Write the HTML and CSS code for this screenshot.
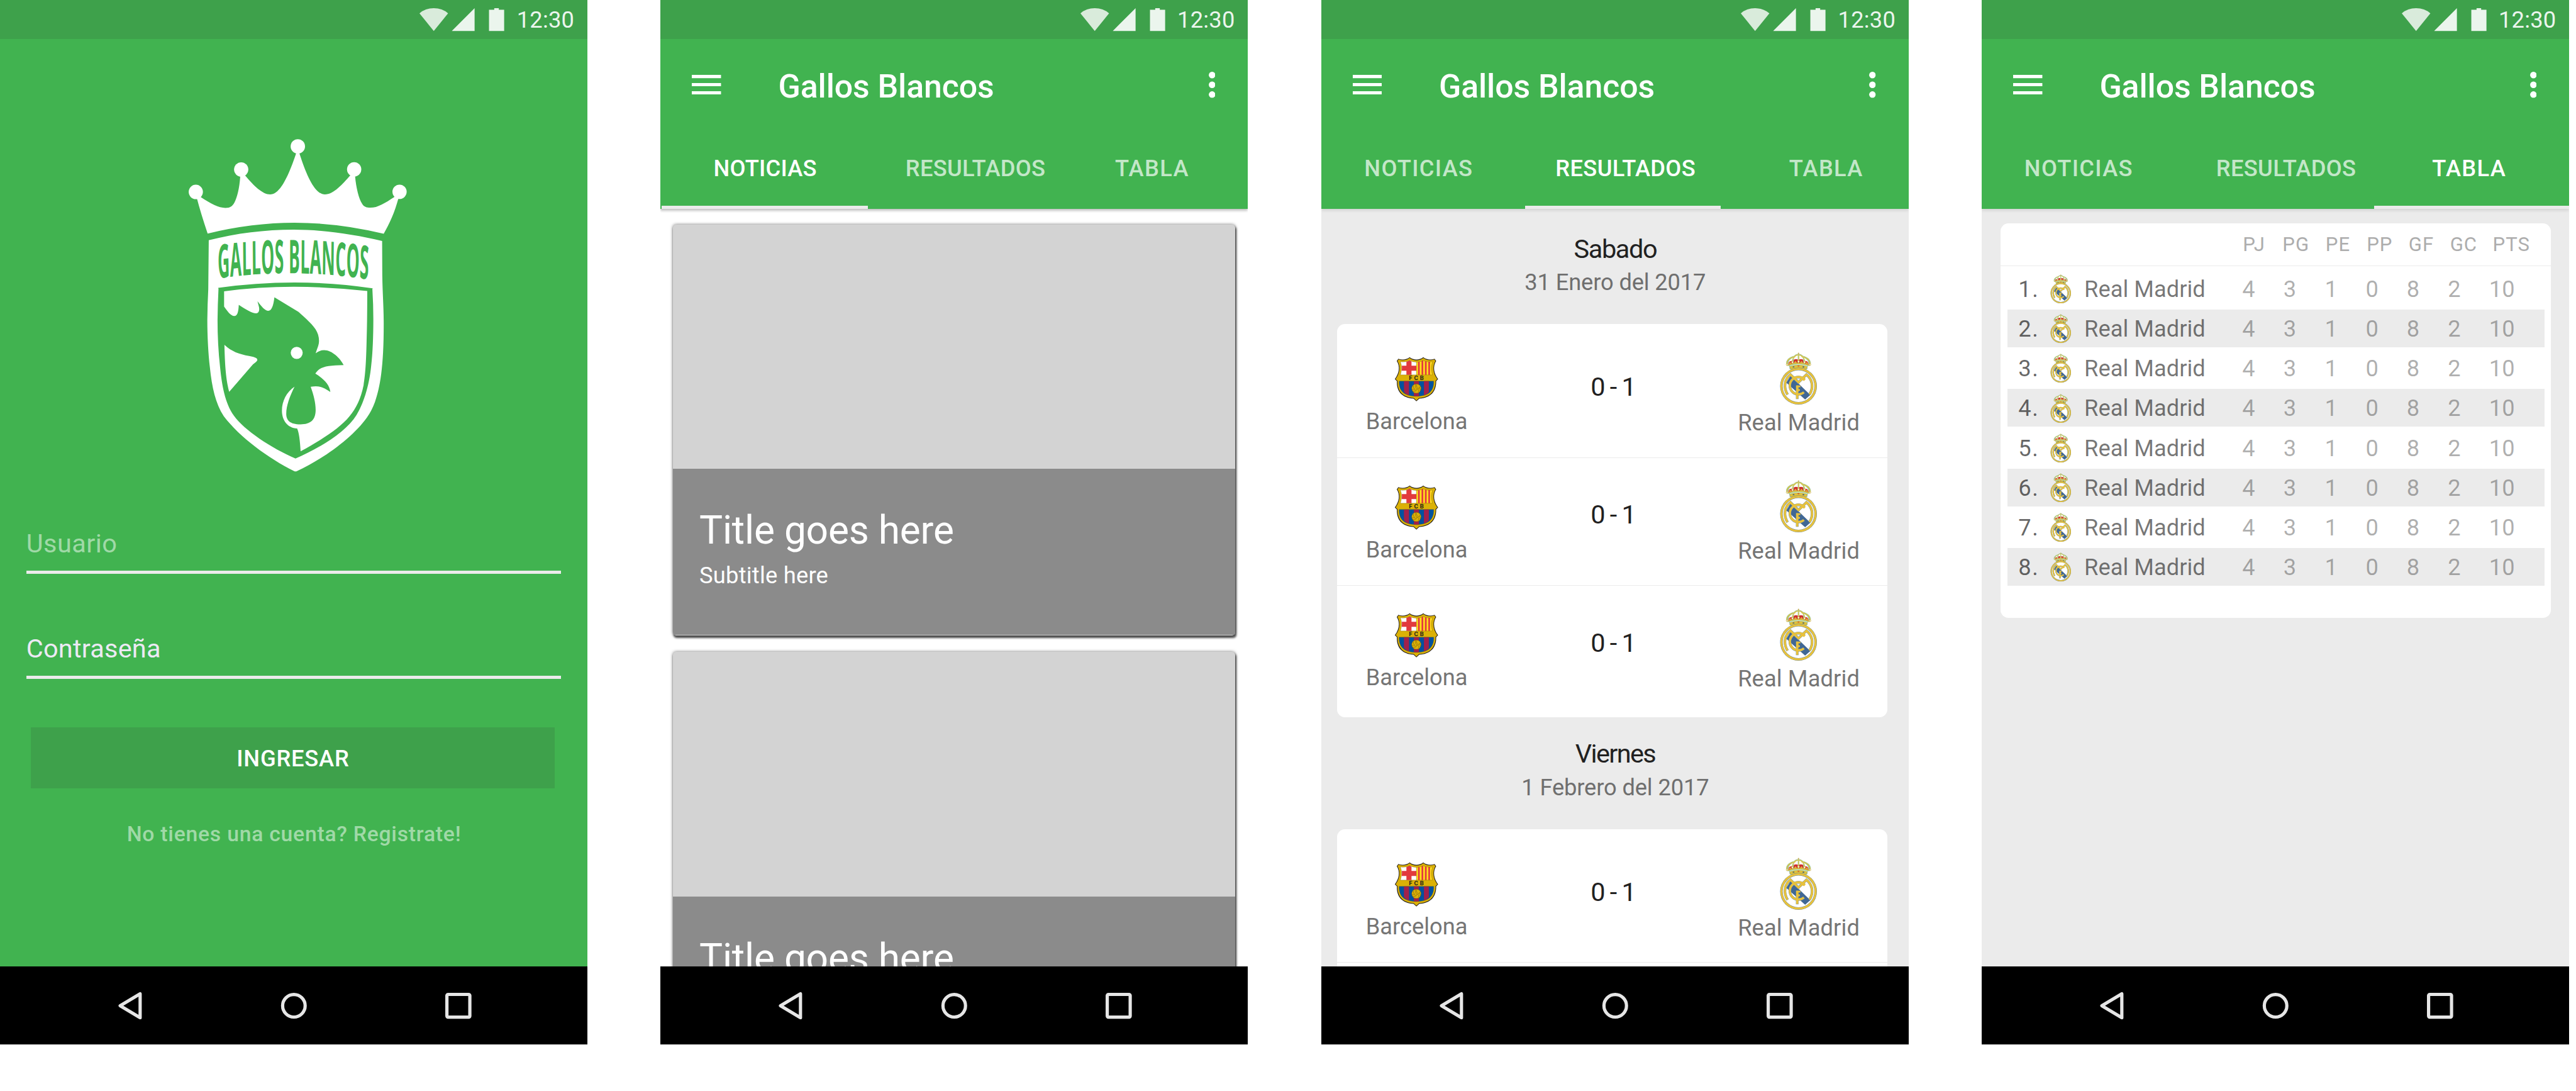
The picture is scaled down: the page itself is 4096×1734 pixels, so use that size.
FILE: index.html
```html
<!DOCTYPE html>
<html lang="es">
<head>
<meta charset="utf-8">
<title>Gallos Blancos</title>
<link rel="stylesheet" href="styles.css">
</head>
<body>

<svg class="defs" aria-hidden="true">
  <symbol id="status-icons" viewBox="1072 0 217 100">
    <path class="wifi" d="M1072 34 Q1087 21 1108.500 21 Q1130 21 1145 34 L1108.500 79 Z"/>
    <path class="status-ink" d="M1154.600 79 H1212.800 V21 Z M1249.600 25 H1263 V21 H1274.700 V25 H1288.300 V79 H1249.600 Z"/>
  </symbol>
  <symbol id="menu" viewBox="0 0 75 50">
    <path fill="#fff" d="M0 0H75V8.300H0Z M0 20.800H75V29.100H0Z M0 41.700H75V50H0Z"/>
  </symbol>
  <symbol id="more" viewBox="0 0 17 67">
    <g fill="#fff"><circle cx="8.500" cy="8.400" r="8.400"/><circle cx="8.500" cy="33.400" r="8.400"/><circle cx="8.500" cy="58.400" r="8.400"/></g>
  </symbol>
  <symbol id="nav-icons" viewBox="300 0 910 200">
    <g class="nav-line">
      <path d="M306.500 100.300 L357.500 70 V131 Z"/>
      <circle cx="750.300" cy="100.500" r="28.800"/>
      <rect x="1141.200" y="71.500" width="58.600" height="58" rx="3"/>
    </g>
  </symbol>
  <symbol id="fcb" viewBox="126 94 340 346">
    <path d="M157 110 C186 120 218 118 244 98 C275 122 317 122 348 98 C374 118 406 120 435 110 L447 127 C420 168 428 222 462 265 L447 281 C449 360 405 410 318 415 L295.500 435 L273 415 C186 410 142 360 146 281 L130 265 C164 222 172 168 145 127 Z" fill="#211d1c"/>
    <path d="M159 115 C190 126 219 122 244 104 C275 128 317 128 348 104 C373 122 402 126 433 115 L441 127 C416 170 423 222 456 265 L442 279 C444 356 402 406 316 410 L295.500 429 L275 410 C190 406 148 356 151 279 L136 265 C169 222 176 170 151 127 Z" fill="#dbb106"/>
    <path d="M173 133 C200 135 225 133 244 122 C262 132 278 135 295.500 135 V233 H173 C183 200 186 165 173 133 Z" fill="#fff"/>
    <path d="M219 132 Q233 129 244 122 Q251 128 258 130 V163 H295.500 V201 H258 V233 H219 V201 H183 Q186 180 184 163 H219 Z" fill="#e23a3d"/>
    <path d="M295.500 135 C315 135 332 131 348 122 C367 133 392 135 420 133 C406 165 409 200 418 233 H295.500 Z" fill="#ffdf1c"/>
    <path d="M308 134 H321 V233 H308 Z M335 128 L348 122 V233 H335 Z M361 128 L374 131 V233 H361 Z M387 133 H400 V233 H387 Z" fill="#e23a3d"/>
    <path d="M173 133 C200 135 225 133 244 122 C275 139 317 139 348 122 C367 133 392 135 420 133 C406 165 409 200 418 233 H173 C183 200 186 165 173 133 Z M295.500 135 V233" fill="none" stroke="#5d4a18" stroke-width="1.500"/>
    <path d="M163 281 H428 C431 350 395 397 295.500 397 C196 397 160 350 163 281 Z" fill="#00529f"/>
    <path d="M200 281 H239 V390 Q215 382 200 364 Z M276 281 H315 V397 H276 Z M353 281 H391 V365 Q376 382 353 390 Z" fill="#a2214b"/>
    <path d="M163 281 H428 C431 350 395 397 295.500 397 C196 397 160 350 163 281 Z" fill="none" stroke="#5d4a18" stroke-width="1.500"/>
    <circle cx="295.500" cy="338" r="36" fill="#dbb106" stroke="#5d4a18" stroke-width="2"/>
    <path d="M290 303 Q284 328 300 342 Q318 338 326 320 M296 307 Q292 322 306 333 M300 342 Q294 362 266 358 M262 345 Q280 338 290 350 M306 340 Q318 344 312 366 M272 316 Q270 332 281 341 M318 330 Q328 340 324 358" fill="none" stroke="#4f4018" stroke-width="2"/>
    <text class="fcb-letters" x="238" y="273" textLength="114">F C B</text>
  </symbol>
  <symbol id="madrid" viewBox="374 58 288 402">
    <path d="M430 160 C412 130 440 96 482 88 C500 66 535 66 552 88 C596 96 622 130 604 160 C588 156 580 168 584 184 H450 C454 168 446 156 430 160 Z" fill="#8fc7a0" stroke="#6c8c86" stroke-width="2"/>
    <path d="M439 152 C436 128 452 108 480 98 C470 114 466 130 470 150 Z M595 152 C598 128 582 108 554 98 C564 114 568 130 564 150 Z" fill="#fff"/>
    <path d="M480 112 C484 90 502 80 512 82 V120 H484 Z M554 112 C550 90 532 80 522 82 V120 H550 Z" fill="#fff"/>
    <path d="M440 152 C438 134 448 124 466 124 L470 148 Z M594 152 C596 134 586 124 568 124 L564 148 Z M478 140 L482 114 Q496 106 512 112 V140 Z M556 140 L552 114 Q538 106 522 112 V140 Z" fill="#d0312f"/>
    <g fill="none" stroke="#dfc13a" stroke-width="8">
      <path d="M430 154 C422 126 444 102 480 92 Q517 62 554 92 C590 102 612 126 604 154"/>
      <path d="M517.500 76 V146 M470 140 C468 114 478 96 494 88 M564 140 C566 114 556 96 540 88"/>
      <path d="M432 157 Q517 128 602 157"/>
    </g>
    <g fill="none" stroke="#a9dab8" stroke-width="5" stroke-linecap="round" stroke-dasharray="1 9">
      <path d="M426 150 C418 122 440 98 480 88 Q517 62 554 88 C594 98 616 122 608 150"/>
      <path d="M517.500 80 V120 M471 122 C472 110 478 98 490 90 M563 122 C562 110 556 98 544 90"/>
    </g>
    <path d="M444 146 l8 -8 8 8 M486 140 l8 -10 8 10 M532 140 l8 -10 8 10 M574 146 l8 -8 8 8" fill="none" stroke="#dfc13a" stroke-width="7"/>
    <g fill="#fff" stroke="#cdb13c" stroke-width="4">
      <circle cx="429" cy="152" r="6"/><circle cx="471" cy="134" r="7"/><circle cx="517.500" cy="129" r="7"/><circle cx="564" cy="134" r="7"/><circle cx="606" cy="152" r="6"/>
    </g>
    <path d="M448 166 Q517 142 586 166 L580 186 H455 Z" fill="#dfc13a" stroke="#6f9c72" stroke-width="2"/>
    <path d="M449 163 Q517 140 586 163" fill="none" stroke="#e9f5ea" stroke-width="4"/>
    <path d="M470 170 l9 -5 10 4 -9 5Z M545 169 l10 -4 9 5 -9 5Z" fill="#27508c"/>
    <path d="M507 163 l10 -4 10 4 -10 4Z" fill="#d0312f"/>
    <path d="M517.500 60 V76 M512 66 H523" stroke="#c4a93c" stroke-width="4"/>
    <circle cx="517.500" cy="317" r="141" fill="#5b7f97"/>
    <circle cx="517.500" cy="317" r="139" fill="#e8c23c"/>
    <circle cx="517.500" cy="317" r="123.500" fill="#5b7f97"/>
    <circle cx="517.500" cy="317" r="121.500" fill="#fff"/>
    <path d="M424 291 L456 238 L608 385 L568 420 Z" fill="#406794"/>
    <g fill="none">
      <g stroke="#6d8fa8" stroke-width="20">
        <path d="M434 382 C398 325 412 262 456 229 L517 288 L578 229 C622 262 637 325 601 382"/>
        <path d="M563 266 A66 66 0 1 0 559 364"/>
        <path d="M507.500 311 V416"/>
      </g>
      <g stroke="#e8c23c" stroke-width="16.500">
        <path d="M433 380 C398 325 412 262 456 229 L517 288 L578 229 C622 262 637 325 602 380"/>
        <path d="M563 266 A66 66 0 1 0 559 364"/>
        <path d="M507.500 312 V414"/>
      </g>
      <path d="M548 266 L559 272 L569 261" stroke="#e8c23c" stroke-width="9"/>
    </g>
    <path d="M499 312 H532 V325 H516 V340 H528 V354 H516 V360 H499 Z" fill="#e8c23c"/>
    <path d="M504 263 Q517 257 531 263 L517.500 274 Z" fill="#fff" stroke="#6d8fa8" stroke-width="2"/>
  </symbol>
</svg>

<main class="board">

  <section class="phone login">
    <div class="status"><svg class="status-icons"><use href="#status-icons"/></svg><span>12:30</span></div>
    <div class="login-body">
      <svg class="logo" viewBox="0 0 1568 1568" preserveAspectRatio="none" role="img" aria-label="Escudo Gallos Blancos">
        <g fill="#fff">
          <ellipse cx="147" cy="280" rx="44.500" ry="32"/><ellipse cx="431" cy="180" rx="44.500" ry="32"/><ellipse cx="785.500" cy="77.500" rx="45" ry="32"/><ellipse cx="1138" cy="179.500" rx="44.500" ry="32"/><ellipse cx="1422" cy="279.500" rx="44.500" ry="32"/>
          <path d="M221 465 Q180 380 152 304 L178 303 C240 332 290 351 332 351 C365 351 375 343 388 328 C405 305 420 265 425 211 V200 L456 207 C510 253 565 291 612 291 C665 291 715 235 775 108 L795 108 C850 230 900 291 955 291 C1010 291 1065 245 1113 207 L1144 200 V211 C1150 262 1168 310 1187 332 C1200 348 1215 350 1240 350 C1285 350 1330 330 1390 302 L1417 304 C1390 375 1360 420 1323 466 Q1040 417 765 417 Q500 417 221 465 Z"/>
          <path d="M228 495 C400 464 580 448 760 448 C950 448 1140 470 1313 498 L1314 650 C1316 740 1323 790 1323 870 C1323 1060 1300 1150 1268 1215 Q1246 1257 1218 1283 C1130 1372 940 1470 780 1522 Q771 1525 762 1522 C600 1465 420 1370 322 1278 C270 1220 248 1150 235 1060 C225 1000 219 920 219 850 Q220 780 225 713 Z"/>
        </g>
        <path class="field-green" d="M287 707 Q520 683 765 683 Q1010 683 1254 709 L1252 712 Q1258 780 1258 846 C1258 920 1254 1000 1245 1050 C1232 1150 1190 1230 1153 1272 C1085 1350 920 1420 771 1466 C620 1420 450 1340 385 1275 C330 1220 310 1140 299 1060 C288 990 283 920 283 850 Q284 780 289 711 Z"/>
        <g fill="#fff">
          <path d="M324 722 Q540 702 760 702 Q990 702 1220 721 C1220 800 1219 870 1216 940 C1213 1040 1208 1090 1197 1140 C1180 1200 1150 1243 1110 1277 C1050 1330 940 1380 803 1434 C799 1385 793 1350 781 1332 C720 1330 686 1295 686 1253 C686 1210 715 1170 765 1146 C735 1190 713 1230 713 1267 C713 1295 735 1314 803 1314 C865 1314 897 1295 897 1250 C897 1218 885 1185 866 1147 C920 1140 945 1150 989 1170 C985 1135 940 1108 895 1088 C925 1055 970 1052 1072 1050 C1050 1020 1000 984 950 984 Q920 984 897 998 C910 970 918 960 918 942 C918 890 860 860 790 814 L639 749 C633 785 622 809 601 809 C580 809 557 788 533 766 C537 780 544 790 544 802 Q543 820 525 820 C500 820 460 802 416 782 C414 812 408 832 388 832 C365 832 342 808 324 790 Z"/>
          <path d="M326 960 C370 990 420 1002 480 1010 C505 1014 532 1017 532 1027 C532 1033 520 1038 505 1047 L356 1169 C340 1125 330 1080 326 960 Z"/>
          <ellipse cx="778.500" cy="996" rx="37.500" ry="27"/>
        </g>
        <g transform="scale(.504 1)">
          <path id="name-arc" fill="none" d="M567 665 Q1508 616 2446 670"/>
          <text class="logo-name"><textPath href="#name-arc" textLength="1872">GALLOS BLANCOS</textPath></text>
        </g>
      </svg>
      <div class="field field-empty">Usuario</div>
      <div class="field field-filled">Contraseña</div>
      <div class="submit">INGRESAR</div>
      <p class="signup">No tienes una cuenta? Registrate!</p>
    </div>
    <div class="nav"><svg><use href="#nav-icons"/></svg></div>
  </section>

  <section class="phone news">
    <header class="appbar">
      <div class="status"><svg class="status-icons"><use href="#status-icons"/></svg><span>12:30</span></div>
      <div class="toolbar"><svg class="menu"><use href="#menu"/></svg><h1>Gallos Blancos</h1><svg class="more"><use href="#more"/></svg></div>
      <nav class="tabs"><span class="tab tab-news active">NOTICIAS</span><span class="tab tab-results">RESULTADOS</span><span class="tab tab-table">TABLA</span></nav>
    </header>
    <div class="screen">
      <article class="card"><div class="card-media"></div><div class="card-text"><h2>Title goes here</h2><p>Subtitle here</p></div></article>
      <article class="card"><div class="card-media"></div><div class="card-text"><h2>Title goes here</h2></div></article>
    </div>
    <div class="nav"><svg><use href="#nav-icons"/></svg></div>
  </section>

  <section class="phone results">
    <header class="appbar">
      <div class="status"><svg class="status-icons"><use href="#status-icons"/></svg><span>12:30</span></div>
      <div class="toolbar"><svg class="menu"><use href="#menu"/></svg><h1>Gallos Blancos</h1><svg class="more"><use href="#more"/></svg></div>
      <nav class="tabs"><span class="tab tab-news">NOTICIAS</span><span class="tab tab-results active">RESULTADOS</span><span class="tab tab-table">TABLA</span></nav>
    </header>
    <div class="screen">
      <div class="day"><h2>Sabado</h2><p>31 Enero del 2017</p></div>
      <div class="matches">
        <div class="match"><div class="team home"><svg><use href="#fcb"/></svg><span>Barcelona</span></div><div class="score">0 - 1</div><div class="team away"><svg><use href="#madrid"/></svg><span>Real Madrid</span></div></div>
        <div class="match"><div class="team home"><svg><use href="#fcb"/></svg><span>Barcelona</span></div><div class="score">0 - 1</div><div class="team away"><svg><use href="#madrid"/></svg><span>Real Madrid</span></div></div>
        <div class="match"><div class="team home"><svg><use href="#fcb"/></svg><span>Barcelona</span></div><div class="score">0 - 1</div><div class="team away"><svg><use href="#madrid"/></svg><span>Real Madrid</span></div></div>
      </div>
      <div class="day"><h2 class="tight">Viernes</h2><p>1 Febrero del 2017</p></div>
      <div class="matches">
        <div class="match"><div class="team home"><svg><use href="#fcb"/></svg><span>Barcelona</span></div><div class="score">0 - 1</div><div class="team away"><svg><use href="#madrid"/></svg><span>Real Madrid</span></div></div>
        <div class="match"></div>
      </div>
    </div>
    <div class="nav"><svg><use href="#nav-icons"/></svg></div>
  </section>

  <section class="phone standings">
    <header class="appbar">
      <div class="status"><svg class="status-icons"><use href="#status-icons"/></svg><span>12:30</span></div>
      <div class="toolbar"><svg class="menu"><use href="#menu"/></svg><h1>Gallos Blancos</h1><svg class="more"><use href="#more"/></svg></div>
      <nav class="tabs"><span class="tab tab-news">NOTICIAS</span><span class="tab tab-results">RESULTADOS</span><span class="tab tab-table active">TABLA</span></nav>
    </header>
    <div class="screen">
      <div class="table">
        <div class="table-head"><span>PJ</span><span>PG</span><span>PE</span><span>PP</span><span>GF</span><span>GC</span><span>PTS</span></div>
        <div class="table-rows">
          <div class="row"><b>1.</b><svg><use href="#madrid"/></svg><strong>Real Madrid</strong><i>4</i><i>3</i><i>1</i><i>0</i><i>8</i><i>2</i><i>10</i></div>
          <div class="row"><b>2.</b><svg><use href="#madrid"/></svg><strong>Real Madrid</strong><i>4</i><i>3</i><i>1</i><i>0</i><i>8</i><i>2</i><i>10</i></div>
          <div class="row"><b>3.</b><svg><use href="#madrid"/></svg><strong>Real Madrid</strong><i>4</i><i>3</i><i>1</i><i>0</i><i>8</i><i>2</i><i>10</i></div>
          <div class="row"><b>4.</b><svg><use href="#madrid"/></svg><strong>Real Madrid</strong><i>4</i><i>3</i><i>1</i><i>0</i><i>8</i><i>2</i><i>10</i></div>
          <div class="row"><b>5.</b><svg><use href="#madrid"/></svg><strong>Real Madrid</strong><i>4</i><i>3</i><i>1</i><i>0</i><i>8</i><i>2</i><i>10</i></div>
          <div class="row"><b>6.</b><svg><use href="#madrid"/></svg><strong>Real Madrid</strong><i>4</i><i>3</i><i>1</i><i>0</i><i>8</i><i>2</i><i>10</i></div>
          <div class="row"><b>7.</b><svg><use href="#madrid"/></svg><strong>Real Madrid</strong><i>4</i><i>3</i><i>1</i><i>0</i><i>8</i><i>2</i><i>10</i></div>
          <div class="row"><b>8.</b><svg><use href="#madrid"/></svg><strong>Real Madrid</strong><i>4</i><i>3</i><i>1</i><i>0</i><i>8</i><i>2</i><i>10</i></div>
        </div>
      </div>
    </div>
    <div class="nav"><svg><use href="#nav-icons"/></svg></div>
  </section>

</main>
</body>
</html>
```
FILE: styles.css
```css
/* The board is 65.8rem wide, so one rem follows the window width. */
html { font-size: calc(100vw / 65.8); }

* { box-sizing: border-box; }

:root {
  --green: #41b350;
  --green-dark: #3ea14b;
  --bar: #ebebeb;
}

body {
  margin: 0;
  background: #fff;
  font-family: Roboto, "Liberation Sans", sans-serif;
  font-size: .5833rem;
  overflow: hidden;
}

h1, h2, p { margin: 0; font-weight: 400; }
svg { display: block; flex: none; }

.defs { position: absolute; width: 0; height: 0; }
.wifi { fill: #d9ebdb; }
.status-ink { fill: #ebf5ed; }
.nav-line { fill: none; stroke: #e6e6e6; stroke-width: 8.3; stroke-linejoin: round; }
.fcb-letters { font: 700 46px Roboto, sans-serif; fill: #211d1c; }

.board { display: flex; gap: 1.875rem; height: 27.86rem; }

.phone {
  display: flex;
  flex-direction: column;
  flex: none;
  width: 15rem;
  height: 26.667rem;
  overflow: hidden;
}

/* status bar */
.status {
  display: flex;
  align-items: center;
  height: 1rem;
  padding-left: 10.72rem;
  background: var(--green-dark);
  color: #ebf5ed;
}
.status-icons { width: 2.17rem; height: 1rem; }
.status span { margin: .02rem 0 0 .31rem; line-height: .7rem; letter-spacing: .006em; }

/* app bar */
.appbar {
  position: relative;
  z-index: 1;
  flex: none;
  height: 5.335rem;
  background: var(--green);
  color: #fff;
  box-shadow: 0 .05rem .06rem rgba(0, 0, 0, .24);
}
.results .appbar, .standings .appbar { box-shadow: 0 .05rem .07rem rgba(0, 0, 0, .09); }

.toolbar { display: flex; align-items: flex-start; height: 2.27rem; padding: .917rem .835rem 0 .8rem; }
.menu { width: .75rem; height: .5rem; }
.toolbar h1 {
  flex: 1;
  margin: -.203rem 0 0 1.456rem;
  font-size: .8333rem;
  font-weight: 500;
  line-height: 1rem;
  letter-spacing: -.0022em;
}
.more { width: .17rem; height: .67rem; margin-top: -.085rem; }

.tabs { display: flex; height: 2.065rem; font-weight: 500; line-height: .8rem; }
.tab { padding-top: .63rem; color: rgba(255, 255, 255, .7); }
.tab.active { color: #fff; border-bottom: .085rem solid var(--bar); }
.tab-news, .tab-table { letter-spacing: .0355em; }
.tab-results { letter-spacing: .0087em; }

.news .tab-news { width: 5.27rem; margin-left: .03rem; padding-left: 1.32rem; letter-spacing: .0058em; }
.news .tab-results { width: 5rem; padding-left: .955rem; }
.news .tab-table { width: 4.7rem; padding-left: 1.306rem; }

.results .tab-news, .standings .tab-news { width: 5.21rem; padding-left: 1.1rem; }
.results .tab-results { width: 5rem; padding-left: .774rem; }
.results .tab-table { width: 4.79rem; padding-left: 1.741rem; }

.standings .tab-news { width: 5.01rem; padding-left: 1.085rem; }
.standings .tab-results { width: 5.01rem; padding-left: .974rem; }
.standings .tab-table { width: 4.98rem; padding-left: 1.48rem; }

.screen { flex: 1; min-height: 0; overflow: hidden; }

/* system navigation */
.nav { flex: none; height: 2rem; padding-left: 3rem; background: #000; }
.nav svg { width: 9.1rem; height: 2rem; }

/* login */
.login { background: var(--green); }
.login-body { flex: 1; padding: 2.3rem .67rem 0; color: #fff; }
.logo { width: 6.4rem; height: 9rem; margin-left: 3.73rem; }
.field-green { fill: var(--green); }
.logo-name { font: 700 207px "Open Sans", "Noto Sans", sans-serif; fill: var(--green); }

.field { padding-bottom: .293rem; border-bottom: .083rem solid var(--bar); font-size: .6667rem; line-height: .8rem; }
.field-empty { margin-top: 1.185rem; color: rgba(255, 255, 255, .5); letter-spacing: .0107em; }
.field-filled { margin-top: 1.497rem; color: #eceaf4; letter-spacing: .0052em; }

.submit {
  width: 13.38rem;
  height: 1.56rem;
  margin: 1.235rem 0 0 .125rem;
  background: var(--green-dark);
  font-weight: 500;
  line-height: 1.6rem;
  text-align: center;
  letter-spacing: .0213em;
}
.signup {
  margin-top: .825rem;
  padding-left: .02rem;
  color: rgba(255, 255, 255, .5);
  font-size: .5417rem;
  font-weight: 500;
  line-height: .7rem;
  text-align: center;
  letter-spacing: .0225em;
}

/* news */
.news .screen { padding: .395rem .32rem 0; }
.card {
  height: 10.5rem;
  margin: 0 .01rem .42rem 0;
  padding-bottom: .02rem;
  border-radius: .08rem;
  background: #d3d3d3;
  box-shadow: .02rem .05rem .05rem rgba(0, 0, 0, .65), 0 0 .08rem rgba(0, 0, 0, .55);
  color: #fff;
  overflow: hidden;
}
.card-media { height: 6.245rem; }
.card-text { height: 4.235rem; padding: .972rem .67rem 0; background: #8b8b8b; }
.card h2 { font-size: 1rem; line-height: 1.2rem; letter-spacing: -.0036em; }
.card p { margin-top: .197rem; line-height: .7rem; letter-spacing: .0063em; }

/* results */
.results .screen, .standings .screen { background: #ebebeb; }
.results .screen { padding: .618rem .545rem 0 .4rem; }
.day { padding-left: .165rem; text-align: center; }
.day h2 { font-size: .6667rem; line-height: .8rem; letter-spacing: -.0345em; color: #212121; }
.day h2.tight { letter-spacing: -.0401em; }
.day p { margin-top: .105rem; line-height: .7rem; letter-spacing: -.004em; color: #6f6f6f; }
.matches { margin: .717rem 0 .536rem; padding: .145rem 0 .085rem; border-radius: .2rem; background: #fff; }
.match {
  display: grid;
  grid-template-columns: 4.076rem 5.955rem 3.531rem;
  height: 3.27rem;
  border-bottom: .02rem solid #ebebeb;
}
.match:last-child { border-bottom: 0; }
.team { display: flex; flex-direction: column; align-items: center; color: #757575; line-height: .7rem; white-space: nowrap; }
.home { gap: .143rem; padding-top: .695rem; }
.home svg { width: 1.133rem; height: 1.153rem; }
.away { gap: .11rem; padding-top: .572rem; letter-spacing: .0028em; }
.away svg { width: .96rem; height: 1.34rem; }
.score { padding-top: 1.057rem; color: #212121; font-size: .6667rem; line-height: .8rem; text-align: center; letter-spacing: -.036em; }

/* standings */
.standings .screen { padding: .375rem .464rem 0 .48rem; }
.table { height: 10.07rem; border-radius: .2rem; background: #fff; }
.table-head {
  display: grid;
  grid-template-columns: 1.014rem 1.1rem 1.05rem 1.07rem 1.06rem 1.09rem 1.2rem;
  height: 1.08rem;
  padding: .18rem 0 0 6.186rem;
  border-bottom: .02rem solid #ebebeb;
  color: #adadad;
  font-size: .5rem;
  line-height: .7rem;
  letter-spacing: .03em;
}
.table-rows { display: flex; flex-direction: column; gap: .05rem; padding: .1rem .17rem 0; }
.row {
  display: grid;
  grid-template-columns: .82rem .865rem 4.037rem 1.05rem 1.055rem 1.045rem 1.05rem 1.05rem 1.055rem 1.1rem;
  height: .965rem;
  padding-left: .28rem;
  line-height: .98rem;
  color: rgba(0, 0, 0, .33);
}
.row:nth-child(even) { background: #ebebeb; }
.row b { font-weight: 400; color: rgba(0, 0, 0, .6); letter-spacing: .045em; }
.row strong { font-weight: 400; color: rgba(0, 0, 0, .54); }
.row i { font-style: normal; }
.row svg { width: .54rem; height: .745rem; margin: .115rem 0 0 -.01rem; }
```
